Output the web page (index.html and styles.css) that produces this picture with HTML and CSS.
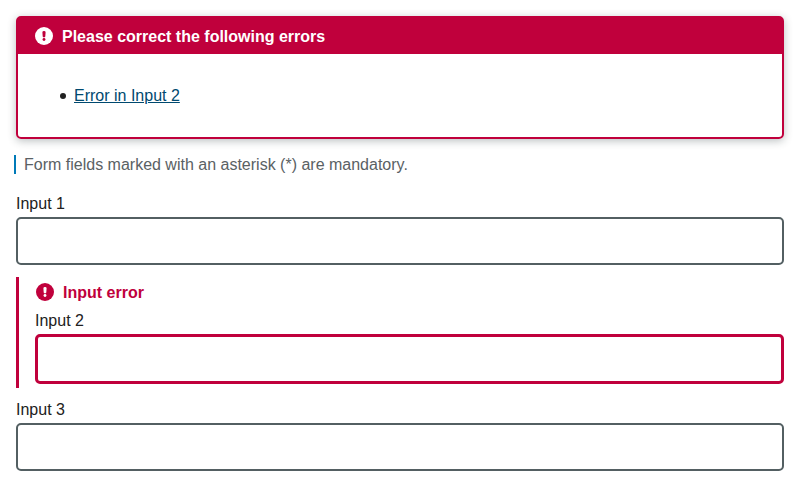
FILE: index.html
```html
<!DOCTYPE html>
<html lang="en">
<head>
<meta charset="utf-8">
<title>Form errors</title>
<link rel="stylesheet" href="styles.css">
</head>
<body>
<section class="summary">
  <h2 class="summary-title">
    <svg class="icon" viewBox="0 0 18 18"><circle cx="9" cy="9" r="9" fill="currentColor"/><path class="mark" d="M7.4 5.2a1.6 1.3 0 0 1 3.2 0l-.3 4.4a1.3 .8 0 0 1-2.6 0z"/><circle class="mark" cx="9" cy="12.5" r="1.45"/></svg>
    <span class="summary-text">Please correct the following errors</span>
  </h2>
  <ul class="summary-list"><li><a href="#input2">Error in Input 2</a></li></ul>
</section>
<form>
  <p class="note"><span class="note-bar"></span>Form fields marked with an asterisk (*) are mandatory.</p>
  <div class="field"><label for="input1">Input 1</label><input id="input1" type="text"></div>
  <div class="field field-error">
    <p class="error"><svg class="icon" viewBox="0 0 18 18"><circle cx="9" cy="9" r="9" fill="currentColor"/><path class="mark" d="M7.4 5.2a1.6 1.3 0 0 1 3.2 0l-.3 4.4a1.3 .8 0 0 1-2.6 0z"/><circle class="mark" cx="9" cy="12.5" r="1.45"/></svg>Input error</p>
    <label for="input2">Input 2</label><input id="input2" type="text">
  </div>
  <div class="field"><label for="input3">Input 3</label><input id="input3" type="text"></div>
</form>
</body>
</html>
```
FILE: styles.css
```css
* { box-sizing: border-box; }
body { margin: 0; padding: 16px; font: 16px/24px "Liberation Sans", Arial, sans-serif; color: #212121; background: #fff; }
h2, p, ul { margin: 0; padding: 0; }
.summary { height: 123px; border: 2px solid #c0003c; border-radius: 5px; box-shadow: 0 2px 8px rgba(30,45,50,.3); }
.summary-title { display: flex; align-items: center; gap: 9px; height: 36px; padding-left: 17px; background: #c0003c; color: #fff; font-size: 16px; --mark: #c0003c; }
.summary-text { padding-top: 2px; }
.icon { width: 18px; height: 18px; flex: none; }
.mark { fill: var(--mark, #fff); }
.summary-list { padding: 30px 0 0 42px; list-style: none; }
.summary-list li { display: flex; align-items: center; gap: 8px; }
.summary-list li::before { content: ""; width: 6px; height: 6px; border-radius: 50%; background: #212121; }
a { color: #00496f; }
.note { display: flex; gap: 8px; margin: 16px 0 0 -2px; height: 19px; line-height: 19px; color: #5a6164; }
.note-bar { width: 2px; background: #007ab8; }
.field { display: flex; flex-direction: column; }
.note + .field { margin-top: 18px; }
label { height: 25px; line-height: 24px; }
input { width: 100%; height: 48px; border: 2px solid #535f62; border-radius: 5px; background: #fff; }
.field-error { margin: 12px 0 10px; height: 111px; padding-left: 16px; border-left: 3px solid #c0003c; }
.error { display: flex; align-items: center; gap: 9px; height: 32px; padding-left: 1px; color: #c0003c; font-weight: 700; }
.error .icon { margin-bottom: 2px; }
.field-error input { height: 50px; border: 3px solid #c0003c; }
```
